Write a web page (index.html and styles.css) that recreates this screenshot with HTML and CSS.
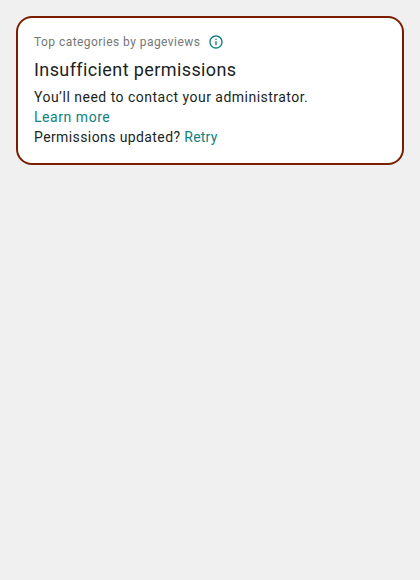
FILE: index.html
```html
<!DOCTYPE html>
<html lang="en">
<head>
<meta charset="utf-8">
<title>Top categories by pageviews</title>
<link rel="stylesheet" href="styles.css">
</head>
<body>
<section class="card">
  <header class="card-header">
    <span class="card-label">Top categories by pageviews</span>
    <svg class="info" viewBox="0 0 24 24" aria-hidden="true"><path d="M11 7h2v2h-2zm0 4h2v6h-2zm1-9C6.480 2 2 6.480 2 12s4.480 10 10 10 10-4.480 10-10S17.520 2 12 2zm0 18c-4.410 0-8-3.590-8-8s3.590-8 8-8 8 3.590 8 8-3.590 8-8 8z"/></svg>
  </header>
  <h1 class="title">Insufficient permissions</h1>
  <p class="line message">You’ll need to contact your administrator.</p>
  <p class="line"><a class="link learn">Learn more</a></p>
  <p class="line"><span class="question">Permissions updated?</span> <a class="link retry">Retry</a></p>
</section>
</body>
</html>
```
FILE: styles.css
```css
body {
  margin: 0;
  padding: 16px;
  background: #f0f0f0;
  font-family: Roboto, sans-serif;
  color: #1b1f1d;
}
.card {
  box-sizing: border-box;
  height: 149px;
  padding: 16px;
  border: 2px solid #7a1e00;
  border-radius: 16px;
  background: #fff;
}
.card-header {
  display: flex;
  align-items: center;
  gap: 8px;
  height: 16px;
}
.card-label {
  width: 166px;
  font-size: 12px;
  line-height: 16px;
  letter-spacing: 0.45px;
  white-space: nowrap;
  color: #747775;
}
.info {
  width: 16px;
  height: 16px;
  fill: #108080;
}
.title {
  margin: 8px 0 5px;
  font-size: 18px;
  font-weight: 400;
  line-height: 24px;
  letter-spacing: 0.4px;
}
.line {
  margin: 0;
  font-size: 14px;
  line-height: 20px;
  letter-spacing: 0.4px;
}
.message {
  letter-spacing: 0.48px;
}
.link {
  color: #108080;
}
.learn {
  letter-spacing: 0.55px;
}
.retry {
  letter-spacing: 0.2px;
}
```
